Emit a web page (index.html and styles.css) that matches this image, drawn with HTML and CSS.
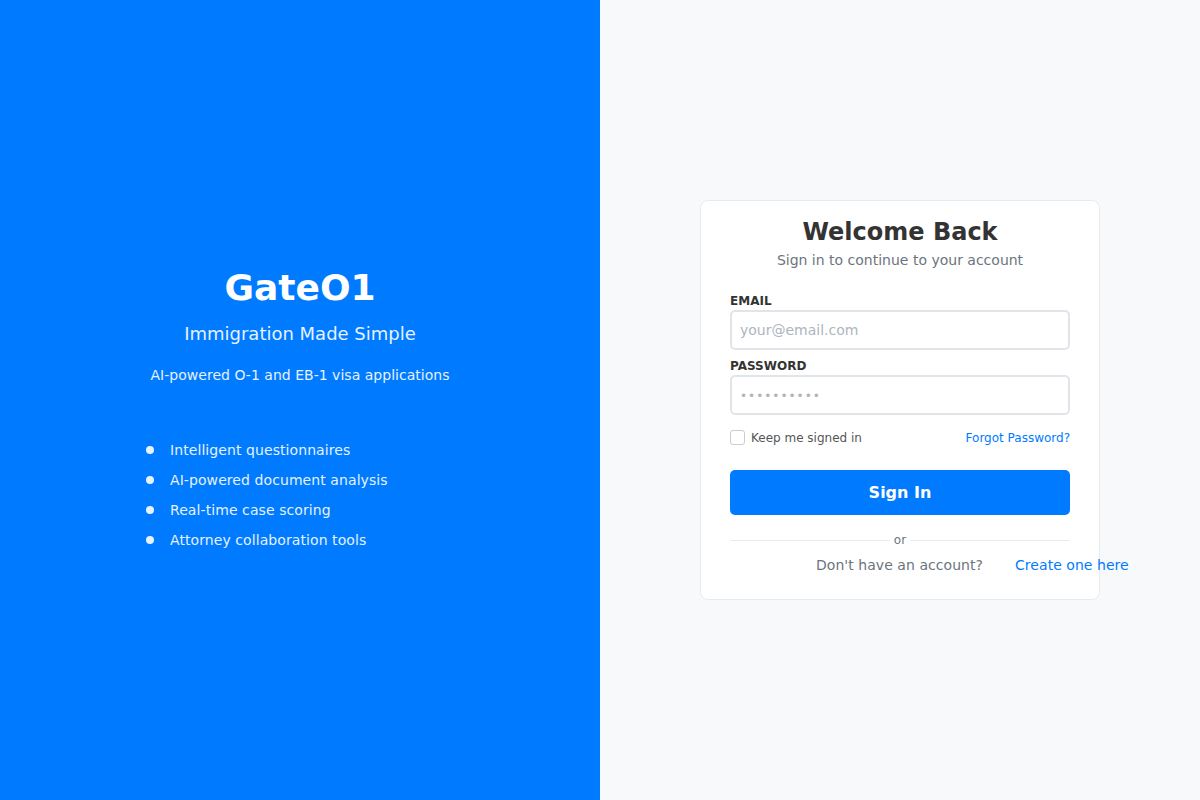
FILE: index.html
```html
<!DOCTYPE html>
<html>
<head>
<meta charset="utf-8">
<link rel="stylesheet" href="styles.css">
</head>
<body>
<div class="page">
  <section class="brand">
    <h1 class="logo">GateO1</h1>
    <p class="tagline">Immigration Made Simple</p>
    <p class="desc">AI-powered O-1 and EB-1 visa applications</p>
    <ul class="features">
      <li>Intelligent questionnaires</li>
      <li>AI-powered document analysis</li>
      <li>Real-time case scoring</li>
      <li>Attorney collaboration tools</li>
    </ul>
  </section>
  <section class="auth">
    <div class="card">
      <h2 class="title">Welcome Back</h2>
      <p class="subtitle">Sign in to continue to your account</p>
      <form class="form">
        <label class="label">EMAIL</label>
        <input class="input" type="email" placeholder="your@email.com">
        <label class="label">PASSWORD</label>
        <input class="input" type="password" placeholder="••••••••••">
        <div class="options">
          <label class="remember"><span class="check"></span>Keep me signed in</label>
          <a class="forgot">Forgot Password?</a>
        </div>
        <button class="submit" type="button">Sign In</button>
        <div class="divider"><span class="line"></span><span class="or">or</span><span class="line"></span></div>
        <div class="signup"><span class="muted">Don't have an account?</span><a class="create">Create one here</a></div>
      </form>
    </div>
  </section>
</div>
</body>
</html>
```
FILE: styles.css
```css
* { box-sizing: border-box; }
html, body { margin: 0; padding: 0; }
body { font-family: "DejaVu Sans", sans-serif; width: 1200px; height: 800px; overflow: hidden; }
.page { display: flex; height: 800px; }
.brand {
  width: 600px; background: #007bff; color: #fff;
  display: flex; flex-direction: column; align-items: center;
  padding-top: 267px;
}
.logo { margin: 0; font-size: 36px; font-weight: 700; line-height: 42px; }
.tagline { margin: 14px 0 0; font-size: 18px; line-height: 22px; opacity: 0.9; }
.desc { margin: 21px 0 0; font-size: 14px; line-height: 18px; opacity: 0.9; letter-spacing: 0.02px; }
.features { list-style: none; margin: 57px 0 0; padding: 0; width: 300px; }
.features li { position: relative; padding-left: 20px; font-size: 14px; line-height: 18px; margin-bottom: 12px; opacity: 0.9; letter-spacing: 0.08px; }
.features li::before {
  content: ""; position: absolute; left: -4px; top: 5px; width: 8px; height: 8px; border-radius: 50%; background: #fff;
}
.auth { width: 600px; background: #f8f9fa; display: flex; align-items: center; justify-content: center; }
.card {
  width: 400px; height: 400px; background: #fff; border: 1px solid #e9ecef; border-radius: 8px;
  padding: 16px 29px 0;
}
.title { margin: 0; text-align: center; font-size: 24px; line-height: 30px; font-weight: 700; color: #333; }
.subtitle { margin: 4px 0 0; text-align: center; font-size: 14px; line-height: 18px; color: #6c757d; }
.form { display: flex; flex-direction: column; margin-top: 25px; }
.label { font-size: 12px; font-weight: 700; color: #333; line-height: 14px; margin-bottom: 2px; }
.input {
  height: 40px; border: 2px solid #e1e5e9; border-radius: 5px; padding: 0 8px;
  font-family: "DejaVu Sans", sans-serif; font-size: 14px; margin-bottom: 9px; outline: none; color: #333;
}
.input::placeholder { color: #adb5bd; }
.input[type=password]::placeholder { letter-spacing: 1px; font-size: 12px; }
.options { display: flex; justify-content: space-between; align-items: center; margin-top: 6px; }
.remember { display: flex; align-items: center; font-size: 12px; color: #555; }
.check { width: 15px; height: 15px; border: 1px solid #ccc; border-radius: 3px; margin-right: 6px; background: #fff; }
.forgot { font-size: 12px; color: #007bff; text-decoration: none; }
.submit {
  margin-top: 25px; height: 45px; border: none; border-radius: 5px; background: #007bff; color: #fff;
  font-family: "DejaVu Sans", sans-serif; font-size: 16px; font-weight: 700;
}
.divider { display: flex; align-items: center; margin-top: 18px; }
.line { flex: 1; height: 1px; background: #e9ecef; }
.or { font-size: 12px; color: #6c757d; padding: 0 4px; line-height: 14px; }
.signup { display: flex; white-space: nowrap; padding-left: 86px; margin-top: 9px; font-size: 14px; line-height: 18px; letter-spacing: 0.05px; }
.muted { color: #6c757d; }
.create { color: #007bff; margin-left: 32px; }
```
